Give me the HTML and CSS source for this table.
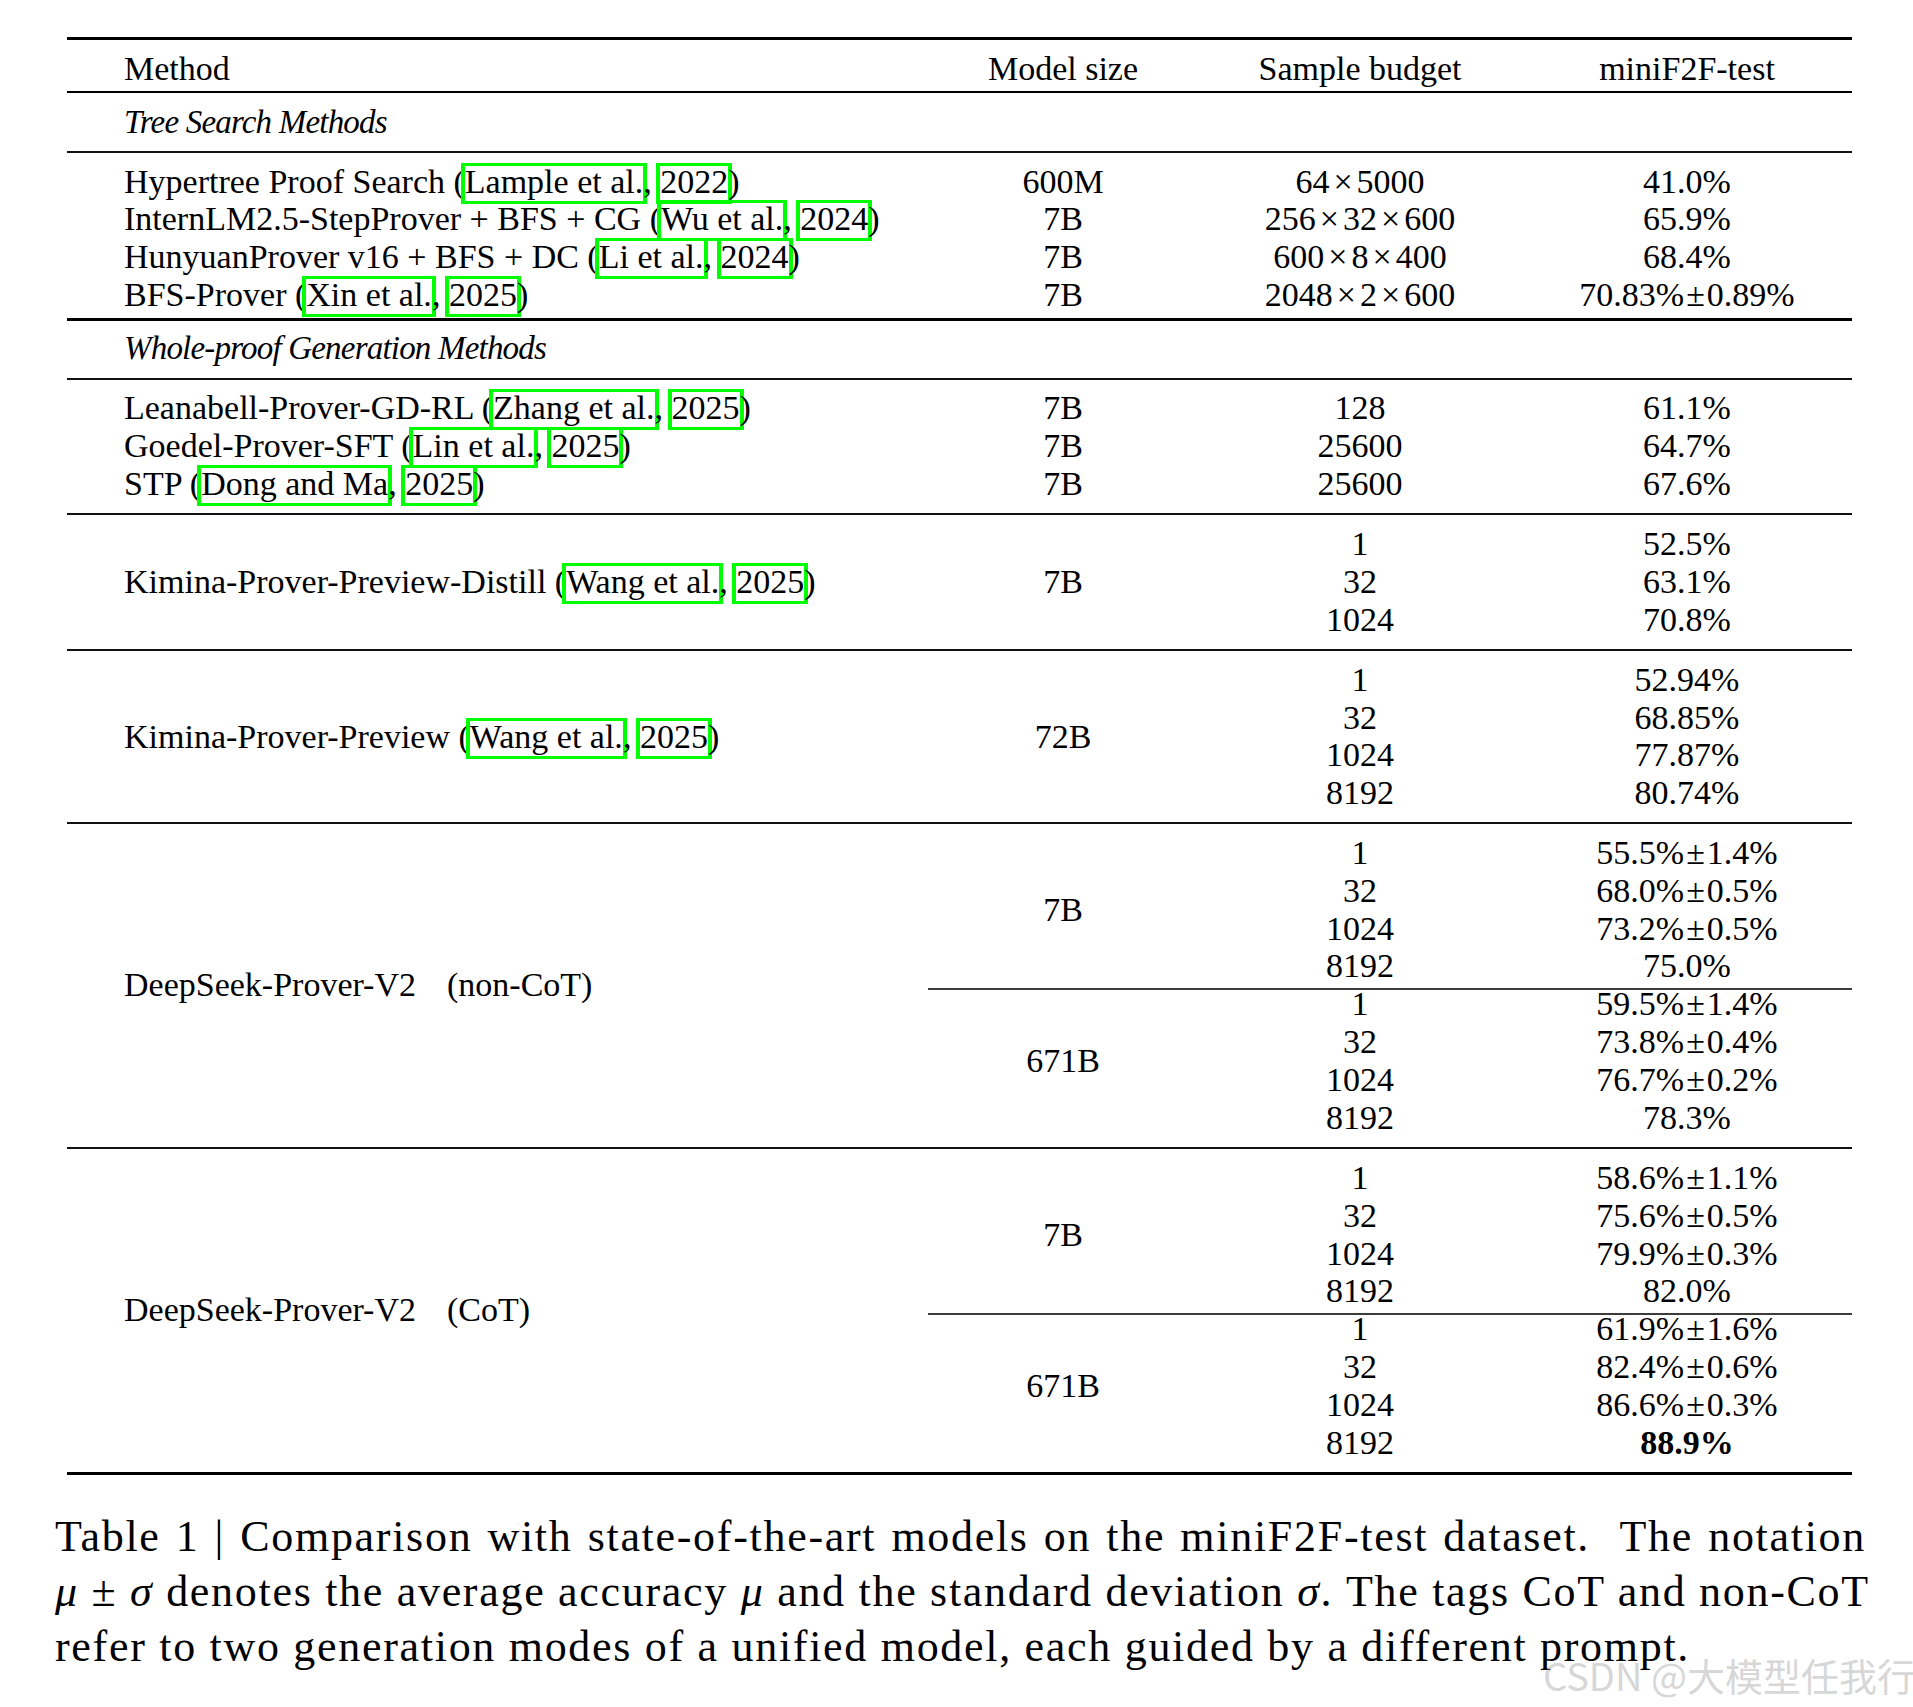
FILE: index.html
```html
<!DOCTYPE html>
<html lang="en">
<head>
<meta charset="utf-8">
<title>Table 1</title>
<link rel="stylesheet" href="styles.css">
</head>
<body>
<div class="page">
  <div class="table">
    <div class="grp head">
      <div class="m">Method</div>
      <div class="c">Model size</div>
      <div class="c">Sample budget</div>
      <div class="c">miniF2F-test</div>
    </div>

    <div class="sect s1">Tree Search Methods</div>

    <div class="grp g1">
      <div class="m">Hypertree Proof Search (<span class="cite">Lample et al.</span>, <span class="cite">2022</span>)</div>
      <div class="c">600M</div>
      <div class="c">64<span class="x">×</span>5000</div>
      <div class="c">41.0%</div>

      <div class="m">InternLM2.5-StepProver + BFS + CG (<span class="cite">Wu et al.</span>, <span class="cite">2024</span>)</div>
      <div class="c">7B</div>
      <div class="c">256<span class="x">×</span>32<span class="x">×</span>600</div>
      <div class="c">65.9%</div>

      <div class="m">HunyuanProver v16 + BFS + DC (<span class="cite">Li et al.</span>, <span class="cite">2024</span>)</div>
      <div class="c">7B</div>
      <div class="c">600<span class="x">×</span>8<span class="x">×</span>400</div>
      <div class="c">68.4%</div>

      <div class="m">BFS-Prover (<span class="cite">Xin et al.</span>, <span class="cite">2025</span>)</div>
      <div class="c">7B</div>
      <div class="c">2048<span class="x">×</span>2<span class="x">×</span>600</div>
      <div class="c">70.83%<span class="pm">±</span>0.89%</div>
    </div>

    <div class="sect s2">Whole-proof Generation Methods</div>

    <div class="grp g2">
      <div class="m">Leanabell-Prover-GD-RL (<span class="cite">Zhang et al.</span>, <span class="cite">2025</span>)</div>
      <div class="c">7B</div>
      <div class="c">128</div>
      <div class="c">61.1%</div>

      <div class="m">Goedel-Prover-SFT (<span class="cite">Lin et al.</span>, <span class="cite">2025</span>)</div>
      <div class="c">7B</div>
      <div class="c">25600</div>
      <div class="c">64.7%</div>

      <div class="m">STP (<span class="cite">Dong and Ma</span>, <span class="cite">2025</span>)</div>
      <div class="c">7B</div>
      <div class="c">25600</div>
      <div class="c">67.6%</div>
    </div>

    <div class="grp g3">
      <div class="m span3">Kimina-Prover-Preview-Distill (<span class="cite">Wang et al.</span>, <span class="cite">2025</span>)</div>
      <div class="c span3">7B</div>
      <div class="c">1</div><div class="c">52.5%</div>
      <div class="c">32</div><div class="c">63.1%</div>
      <div class="c">1024</div><div class="c">70.8%</div>
    </div>

    <div class="grp g4">
      <div class="m span4">Kimina-Prover-Preview (<span class="cite">Wang et al.</span>, <span class="cite">2025</span>)</div>
      <div class="c span4">72B</div>
      <div class="c">1</div><div class="c">52.94%</div>
      <div class="c">32</div><div class="c">68.85%</div>
      <div class="c">1024</div><div class="c">77.87%</div>
      <div class="c">8192</div><div class="c">80.74%</div>
    </div>

    <div class="grp ds g5">
      <div class="m mid">DeepSeek-Prover-V2<span class="tag">(non-CoT)</span></div>
      <div class="sub">
        <div class="subg">
          <div class="c span4">7B</div>
          <div class="c">1</div><div class="c">55.5%<span class="pm">±</span>1.4%</div>
          <div class="c">32</div><div class="c">68.0%<span class="pm">±</span>0.5%</div>
          <div class="c">1024</div><div class="c">73.2%<span class="pm">±</span>0.5%</div>
          <div class="c">8192</div><div class="c">75.0%</div>
        </div>
        <div class="subg split">
          <div class="c span4">671B</div>
          <div class="c">1</div><div class="c">59.5%<span class="pm">±</span>1.4%</div>
          <div class="c">32</div><div class="c">73.8%<span class="pm">±</span>0.4%</div>
          <div class="c">1024</div><div class="c">76.7%<span class="pm">±</span>0.2%</div>
          <div class="c">8192</div><div class="c">78.3%</div>
        </div>
      </div>
    </div>

    <div class="grp ds g6">
      <div class="m mid">DeepSeek-Prover-V2<span class="tag">(CoT)</span></div>
      <div class="sub">
        <div class="subg">
          <div class="c span4">7B</div>
          <div class="c">1</div><div class="c">58.6%<span class="pm">±</span>1.1%</div>
          <div class="c">32</div><div class="c">75.6%<span class="pm">±</span>0.5%</div>
          <div class="c">1024</div><div class="c">79.9%<span class="pm">±</span>0.3%</div>
          <div class="c">8192</div><div class="c">82.0%</div>
        </div>
        <div class="subg split">
          <div class="c span4">671B</div>
          <div class="c">1</div><div class="c">61.9%<span class="pm">±</span>1.6%</div>
          <div class="c">32</div><div class="c">82.4%<span class="pm">±</span>0.6%</div>
          <div class="c">1024</div><div class="c">86.6%<span class="pm">±</span>0.3%</div>
          <div class="c">8192</div><div class="c best">88.9%</div>
        </div>
      </div>
    </div>
  </div>

  <div class="caption">
    <div class="ln j">Table 1 | Comparison with state-of-the-art models on the miniF2F-test dataset.&nbsp; The notation</div>
    <div class="ln j"><i>μ</i> ± <i>σ</i> denotes the average accuracy <i>μ</i> and the standard deviation <i>σ</i>. The tags CoT and non-CoT</div>
    <div class="ln">refer to two generation modes of a unified model, each guided by a different prompt.</div>
  </div>

  <div class="watermark">CSDN @大模型任我行</div>
</div>
</body>
</html>
```

FILE: styles.css
```css
html, body {
  margin: 0;
  padding: 0;
  background: #fff;
  overflow: hidden;
}

.page {
  position: relative;
  width: 1913px;
  height: 1707px;
  overflow: hidden;
  color: #000;
  font-family: "Liberation Serif", "Times New Roman", serif;
}

.table {
  margin: 37px 0 0 67px;
  width: 1785px;
  border-top: 3px solid #000;
  border-bottom: 3px solid #000;
  font-size: 34px;
  line-height: 37.8px;
}

.grp {
  display: grid;
  grid-template-columns: 861px 270px 324px 330px;
}

.m {
  padding-left: 57px;
  text-align: left;
  white-space: nowrap;
}

.c {
  text-align: center;
  white-space: nowrap;
}

.span3 { grid-row: span 3; align-self: center; }
.span4 { grid-row: span 4; align-self: center; }

.head {
  padding: 10px 0 3px;
  border-bottom: 2px solid #000;
}

.sect {
  padding-left: 57px;
  font-style: italic;
  font-size: 33px;
  letter-spacing: -0.8px;
}

.s1 {
  padding-top: 11px;
  padding-bottom: 9px;
  border-bottom: 2px solid #111;
}

.s2 {
  padding-top: 9.5px;
  padding-bottom: 10px;
  border-bottom: 2px solid #111;
}

.g1 {
  padding: 10px 0 4px;
  border-bottom: 3px solid #000;
}

.g2 {
  padding: 9px 0 10.5px;
  border-bottom: 2px solid #111;
}

.g3 {
  padding: 10.5px 0 10px;
  border-bottom: 2px solid #111;
}

.g4 {
  padding: 10px 0 10px;
  border-bottom: 2px solid #111;
}

.g5 {
  padding: 10px 0 10.5px;
  border-bottom: 2px solid #111;
}

.g6 {
  padding: 10px 0 10.5px;
}

.ds {
  grid-template-columns: 861px 924px;
}

.mid {
  align-self: center;
}

.tag {
  margin-left: 31px;
}

.subg {
  display: grid;
  grid-template-columns: 270px 324px 330px;
}

.split {
  background: linear-gradient(#3c3c3c, #3c3c3c) no-repeat 0 3px / 100% 2px;
}

.x {
  margin: 0 4px;
}

.pm {
  margin: 0 2px;
}

.best {
  font-weight: bold;
}

.cite {
  padding: 0 4px 4px;
  margin: 0 -4px;
  box-shadow:
    inset 4px 0 0 #00ff00,
    inset -4px 0 0 #00ff00,
    inset 0 3px 0 #00ff00,
    inset 0 -3px 0 #00ff00;
}

.caption {
  margin: 34px 0 0 55px;
  width: 1811px;
  font-size: 44px;
  line-height: 55px;
  letter-spacing: 1.7px;
}

.ln {
  white-space: nowrap;
}

.j {
  text-align: justify;
  text-align-last: justify;
}

.watermark {
  position: absolute;
  left: 1543px;
  top: 1655px;
  font-family: "Noto Sans CJK SC", "Noto Sans", sans-serif;
  font-size: 38px;
  line-height: 40px;
  color: rgba(150, 150, 150, 0.4);
  white-space: nowrap;
}
```
